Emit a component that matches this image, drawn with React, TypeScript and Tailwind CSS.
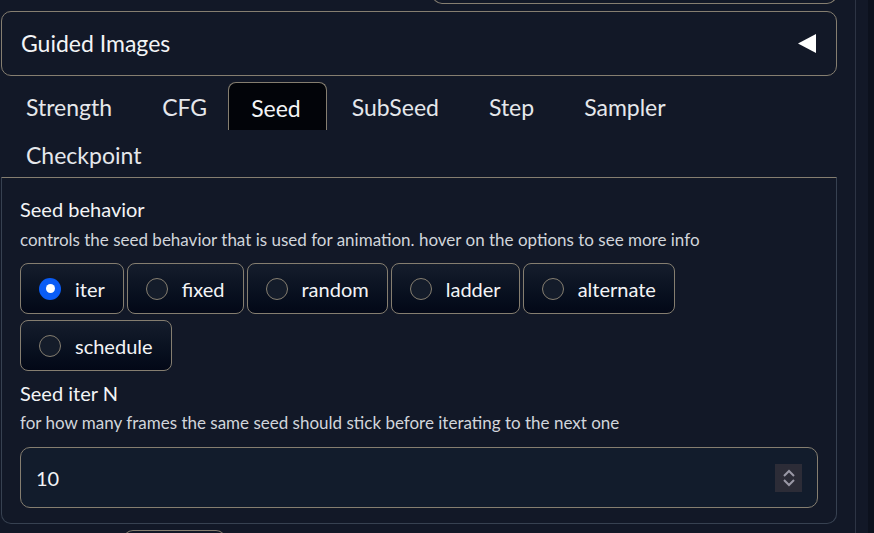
import React from "react";

const font = { fontFamily: 'Lato, "Noto Sans", sans-serif' };

function Radio({ label, checked }: { label: string; checked?: boolean }) {
  return (
    <div className="flex h-[51px] items-center gap-[14px] rounded-[8px] border border-[#857e70] bg-gradient-to-b from-[#151d2c] to-[#030817] pl-[18px] pr-[18px]">
      {checked ? (
        <span className="flex h-[22px] w-[22px] items-center justify-center rounded-full bg-[#0a5cf5]">
          <span className="h-[9px] w-[9px] rounded-full bg-white" />
        </span>
      ) : (
        <span className="h-[22px] w-[22px] rounded-full border border-[#857e70] bg-[#141c2a]" />
      )}
      <span className="text-[20px] text-[#f3f4f6]">{label}</span>
    </div>
  );
}

export default function App() {
  const tabs = ["Strength", "CFG", "Seed", "SubSeed", "Step", "Sampler", "Checkpoint"];
  return (
    <div className="flex h-[533px] w-[874px] overflow-hidden bg-[#121827] text-[#f3f4f6]" style={font}>
      <div className="ml-[1px] flex w-[836px] shrink-0 flex-col">
        <div className="ml-[431px] mt-[-8px] h-[12px] shrink-0 rounded-b-[10px] border border-t-0 border-[#857e70]" />
        <div className="mt-[7px] flex h-[65px] shrink-0 items-center justify-between rounded-[10px] border border-[#857e70] pl-[19px] pr-[19px]">
          <span className="text-[23px]">Guided Images</span>
          <svg width="19" height="19" viewBox="0 0 19 19">
            <polygon points="0,9.5 18,0 18,19" fill="#ffffff" />
          </svg>
        </div>
        <div className="mt-[6px] flex shrink-0 flex-wrap">
          {tabs.map((t) => (
            <div
              key={t}
              className={
                t === "Seed"
                  ? "flex h-[48px] items-center rounded-t-[8px] border border-b-0 border-[#857e70] bg-[#020409] pl-[22px] pr-[25px] pt-[3px] text-[23px]"
                  : t === "CFG"
                  ? "flex h-[47px] items-center border border-transparent pl-[24px] pr-[20px] pt-[3px] text-[23px] text-[#e5e7eb]"
                  : "flex h-[47px] items-center border border-transparent px-[24px] pt-[3px] text-[23px] text-[#e5e7eb]"
              }
            >
              {t}
            </div>
          ))}
        </div>
        <div className="flex h-[347px] shrink-0 flex-col rounded-b-[10px] border border-[#374151] border-t-[#857e70] px-[18px] pt-[18px]">
          <div className="text-[20px] leading-[26px]">Seed behavior</div>
          <div className="mt-[6px] text-[17px] leading-[24px] text-[#d1d5db]">
            controls the seed behavior that is used for animation. hover on the options to see more info
          </div>
          <div className="mt-[11px] flex flex-wrap gap-x-[3px] gap-y-[6px]">
            <Radio label="iter" checked />
            <Radio label="fixed" />
            <Radio label="random" />
            <Radio label="ladder" />
            <Radio label="alternate" />
            <Radio label="schedule" />
          </div>
          <div className="mt-[9px] text-[20px] leading-[26px]">Seed iter N</div>
          <div className="mt-[5px] text-[17px] leading-[24px] text-[#d1d5db]">
            for how many frames the same seed should stick before iterating to the next one
          </div>
          <div className="mt-[12px] flex h-[61px] shrink-0 items-center justify-between rounded-[10px] border border-[#857e70] bg-[#121c2c] pl-[15px] pr-[15px]">
            <span className="text-[20px]">10</span>
            <div className="flex h-[28px] w-[27px] flex-col items-center justify-center bg-[#2c2c37]">
              <svg width="14" height="20" viewBox="0 0 14 20" fill="none" stroke="#9a98a6" strokeWidth="2">
                <polyline points="2,8 7,3 12,8" />
                <polyline points="2,12 7,17 12,12" />
              </svg>
            </div>
          </div>
        </div>
        <div className="ml-[122px] mt-[6px] h-[12px] w-[103px] shrink-0 rounded-t-[10px] border border-b-0 border-[#857e70]" />
      </div>
      <div className="ml-[18px] w-[1px] shrink-0 bg-[#2d3444]" />
      <div className="ml-[12px] flex-1 bg-[#0c111d]" />
    </div>
  );
}
